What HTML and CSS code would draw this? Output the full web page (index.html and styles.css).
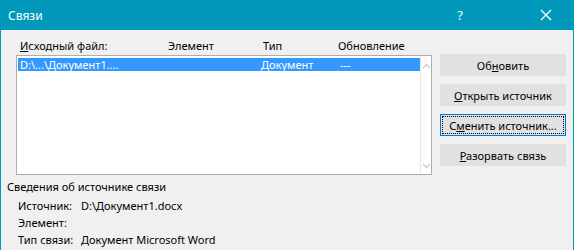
FILE: index.html
```html
<!DOCTYPE html>
<html lang="ru">

<head>
    <meta charset="UTF-8" />
    <title>Связи</title>
    <link rel="stylesheet" href="styles.css">
</head>

<body>
    <div class="window">
        <div class="titlebar">
            <span class="title">Связи</span>
            <span class="help">?</span>
            <span class="close">
                <svg width="12" height="12" viewBox="0 0 12 12">
                    <path d="M1 1 L11 11 M11 1 L1 11" stroke="#fff" stroke-width="1.3" fill="none" />
                </svg>
            </span>
        </div>

        <div class="body">
            <div class="main">
                <div class="links">
                    <div class="heads">
                        <span class="col-file"><u>И</u>сходный файл:</span>
                        <span class="col-item">Элемент</span>
                        <span class="col-type">Тип</span>
                        <span class="col-upd">Обновление</span>
                    </div>
                    <div class="listbox">
                        <div class="rows">
                            <div class="row selected">
                                <span class="col-file">D:\...\Документ1....</span>
                                <span class="col-item"></span>
                                <span class="col-type">Документ</span>
                                <span class="col-upd">---</span>
                            </div>
                        </div>
                        <div class="scrollbar">
                            <svg width="9" height="6" viewBox="0 0 9 6">
                                <path d="M1 5 L4.5 1.5 L8 5" stroke="#c4c4c4" stroke-width="1.2" fill="none" />
                            </svg>
                            <svg width="9" height="6" viewBox="0 0 9 6">
                                <path d="M1 1 L4.5 4.5 L8 1" stroke="#c4c4c4" stroke-width="1.2" fill="none" />
                            </svg>
                        </div>
                    </div>
                </div>

                <div class="buttons">
                    <button>Об<u>н</u>овить</button>
                    <button><u>О</u>ткрыть источник</button>
                    <button class="focused"><span class="focus-ring">С<u>м</u>енить источник...</span></button>
                    <button><u>Р</u>азорвать связь</button>
                </div>
            </div>

            <div class="details">
                <div class="details-title">Сведения об источнике связи</div>
                <div class="info">
                    <span class="label">Источник:</span>
                    <span>D:\Документ1.docx</span>
                    <span class="label">Элемент:</span>
                    <span></span>
                    <span class="label">Тип связи:</span>
                    <span>Документ Microsoft Word</span>
                </div>
            </div>
        </div>
    </div>
</body>

</html>
```

FILE: styles.css
```css
:root {
    --accent: #0099bc;
    --face: #f0f0f0;
    --button: #e1e1e1;
    --select: #3399ff;
    --text: #000;
}

* {
    box-sizing: border-box;
}

body {
    margin: 0;
    font-family: 'Noto Sans', 'Open Sans', sans-serif;
    font-size: 11px;
    color: var(--text);
}

.window {
    width: 574px;
    height: 250px;
    background: var(--face);
    border-left: 1px solid var(--accent);
    border-right: 1px solid var(--accent);
    display: flex;
    flex-direction: column;
}

.titlebar {
    height: 30px;
    background: var(--accent);
    color: white;
    display: flex;
    align-items: center;
    padding-left: 7px;
}

.title {
    flex: 1;
    font-size: 12px;
}

.help {
    width: 20px;
    text-align: center;
    margin-right: 64px;
    font-size: 13px;
}

.close {
    width: 24px;
    display: flex;
    justify-content: center;
    margin-right: 15px;
}

.body {
    flex: 1;
    display: flex;
    flex-direction: column;
    padding: 8px 0 0 6px;
}

.main {
    display: flex;
}

.links {
    margin-left: 9px;
    width: 416px;
}

.heads,
.row {
    display: flex;
    height: 16px;
    line-height: 16px;
    white-space: nowrap;
}

.heads {
    height: 17px;
}

.col-file {
    width: 152px;
    padding-left: 4px;
}

.col-item {
    width: 91px;
}

.col-type {
    width: 79px;
}

.col-upd {
    width: 80px;
}

.heads .col-type {
    padding-left: 4px;
}

.listbox {
    height: 120px;
    background: white;
    border: 1px solid #adadad;
    display: flex;
}

.rows {
    flex: 1;
    padding: 2px 0 0 1px;
}

.row.selected {
    background: var(--select);
    color: white;
    height: 13px;
    line-height: 13px;
}

.row .col-file {
    padding-left: 2px;
}

.scrollbar {
    width: 17px;
    border-left: 1px solid #e6e6e6;
    display: flex;
    flex-direction: column;
    justify-content: space-between;
    align-items: center;
    padding: 7px 0 5px;
}

.buttons {
    margin-left: 8px;
    margin-top: 16px;
    display: flex;
    flex-direction: column;
    gap: 8px;
}

button {
    width: 126px;
    height: 22px;
    padding: 0;
    border: 1px solid var(--button);
    background: var(--button);
    font-family: inherit;
    font-size: 11px;
    color: var(--text);
}

button.focused {
    border: 1px solid #0078d7;
    padding: 1px;
}

.focus-ring {
    display: block;
    height: 18px;
    line-height: 17px;
    border: 1px dotted #000;
}

.details {
    margin-top: 4px;
}

.details-title {
    height: 17px;
}

.info {
    margin-top: 2px;
    margin-left: 11px;
    display: grid;
    grid-template-columns: 63px auto;
    grid-auto-rows: 17px;
}
```
